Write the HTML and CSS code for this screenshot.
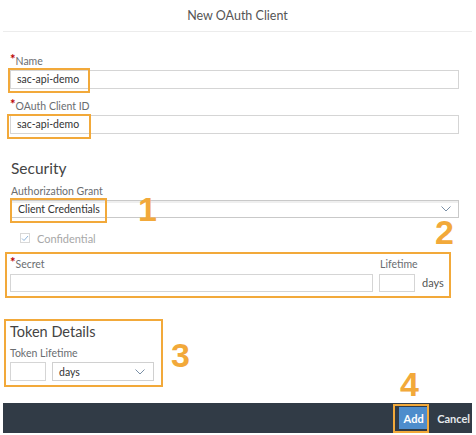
FILE: index.html
```html
<!DOCTYPE html>
<html>
<head>
<meta charset="utf-8">
<link rel="stylesheet" href="styles.css">
</head>
<body>
<div class="dialog">
  <header class="dlg-head">New OAuth Client</header>
  <main class="dlg-body">
    <div class="field">
      <div class="lbl"><span class="req">*</span>Name</div>
      <div class="input">sac-api-demo</div>
    </div>
    <div class="field">
      <div class="lbl"><span class="req">*</span>OAuth Client ID</div>
      <div class="input">sac-api-demo</div>
    </div>
    <h2 class="section-title">Security</h2>
    <div class="lbl lbl-grant">Authorization Grant</div>
    <div class="select">
      <span>Client Credentials</span>
      <svg class="chev" width="10" height="6" viewBox="0 0 10 6"><path d="M0.5 0.5 L5 5 L9.5 0.5" fill="none" stroke="#7a8fa6" stroke-width="1"/></svg>
    </div>
    <div class="check-row">
      <span class="checkbox"><svg width="8" height="7" viewBox="0 0 8 7"><path d="M1 3.5 L3 5.5 L7 1" fill="none" stroke="#8fb4d9" stroke-width="1"/></svg></span>
      <span class="check-text">Confidential</span>
    </div>
    <div class="secret-box">
      <div class="lbl"><span class="req">*</span>Secret</div>
      <div class="lbl">Lifetime</div>
      <div></div>
      <div class="input"></div>
      <div class="input"></div>
      <div class="unit">days</div>
    </div>
    <div class="token-box">
      <h3 class="token-title">Token Details</h3>
      <div class="lbl lbl-token">Token Lifetime</div>
      <div class="token-row">
        <div class="input small"></div>
        <div class="select token-select">
          <span>days</span>
          <svg class="chev" width="10" height="6" viewBox="0 0 10 6"><path d="M0.5 0.5 L5 5 L9.5 0.5" fill="none" stroke="#7a8fa6" stroke-width="1"/></svg>
        </div>
      </div>
    </div>
  </main>
  <footer class="dlg-foot">
    <button class="btn-add">Add</button>
    <button class="btn-cancel">Cancel</button>
  </footer>

  <span class="mark mark-name"></span>
  <span class="mark mark-id"></span>
  <span class="mark mark-cred"></span>
  <span class="mark mark-add"></span>
  <span class="num num-1">1</span>
  <span class="num num-2">2</span>
  <span class="num num-3">3</span>
  <span class="num num-4">4</span>
</div>
</body>
</html>
```

FILE: styles.css
```css
* { box-sizing: border-box; }
html, body { margin: 0; padding: 0; background: #fff; }
body { font-family: Lato, "Open Sans", sans-serif; color: #333; }

.dialog {
  position: relative;
  width: 476px;
  height: 435px;
  display: flex;
  flex-direction: column;
  background: #fff;
}

.dlg-head {
  height: 32px;
  margin: 0 4px 0 3px;
  border-bottom: 1px solid #ececec;
  display: flex;
  align-items: center;
  justify-content: center;
  font-size: 12.5px;
  color: #555;
  padding-bottom: 1px;
}

.dlg-body {
  flex: 1;
  padding: 22px 17px 0 10px;
}

.field { margin-bottom: 10px; }

.lbl {
  font-size: 10.5px;
  line-height: 14px;
  height: 14px;
  color: #6a6d70;
  white-space: nowrap;
}
.req {
  color: #bb0000;
  font-size: 13px;
  font-weight: bold;
  position: relative;
  top: -1px;
  line-height: 10px;
}

.input {
  margin-top: 2px;
  height: 19px;
  border: 1px solid #d5d5d5;
  background: #fff;
  font-size: 10.5px;
  line-height: 17px;
  padding-left: 6px;
  color: #333;
}

.section-title {
  margin: 25px 0 0 1px;
  font-size: 15.5px;
  line-height: 18px;
  font-weight: normal;
  color: #444;
}

.lbl-grant { margin-top: 7px; margin-left: 1px; }

.select {
  margin-top: 2px;
  margin-left: 1px;
  height: 18px;
  border: 1px solid #c9c9c9;
  box-shadow: inset 0 2px 0 #efefef;
  display: flex;
  align-items: center;
  justify-content: space-between;
  padding: 0 7px 0 6px;
  font-size: 10.5px;
  color: #333;
}
.chev { display: block; }

.check-row {
  margin-top: 13px;
  height: 14px;
  display: flex;
  align-items: center;
  padding-left: 10px;
}
.checkbox {
  width: 10px;
  height: 10px;
  border: 1px solid #d8d8d8;
  display: flex;
  align-items: center;
  justify-content: center;
}
.check-text {
  margin-left: 7px;
  font-size: 11px;
  color: #a8a8a8;
}

.secret-box {
  margin: 7px 0 0 -5px;
  width: 446px;
  height: 46px;
  border: 2px solid #f2a93a;
  padding: 3px 0 0 3px;
  display: grid;
  grid-template-columns: 363px 36px 1fr;
  grid-template-rows: 14px 18px;
  column-gap: 6px;
  row-gap: 3px;
}
.secret-box .input { margin-top: 0; height: 18px; }
.secret-box .lbl:nth-child(2) { padding-left: 1px; }
.unit {
  font-size: 11px;
  color: #555;
  line-height: 18px;
  padding-left: 1px;
}

.token-box {
  margin: 21px 0 0 -6px;
  width: 159px;
  height: 68px;
  border: 2px solid #f2a93a;
  padding: 2px 0 0 4px;
}
.token-title {
  margin: 0;
  font-size: 14.5px;
  line-height: 17px;
  font-weight: normal;
  color: #444;
}
.lbl-token { margin-top: 6px; }
.token-row {
  margin-top: 2px;
  display: flex;
  gap: 6px;
}
.token-row .input { margin-top: 0; }
.small { width: 36px; }
.token-select {
  margin: 0;
  width: 102px;
  height: 19px;
  border: 1px solid #d0d0d0;
  box-shadow: none;
  padding: 0 8px 0 6px;
}

.dlg-foot {
  height: 30px;
  margin: 0 4px 2px 3px;
  background: #313b46;
  display: flex;
  align-items: center;
  justify-content: flex-end;
  padding-right: 2px;
}
.btn-add {
  width: 29px;
  height: 22px;
  border: none;
  background: #4e8dcc;
  color: #fff;
  font-family: Lato, "Open Sans", sans-serif;
  font-size: 11px;
  font-weight: bold;
  padding: 0;
  margin-right: 9px;
}
.btn-cancel {
  border: none;
  background: transparent;
  color: #e6e9ec;
  font-family: Lato, "Open Sans", sans-serif;
  font-size: 11px;
  font-weight: bold;
  padding: 0;
}

.mark {
  position: absolute;
  border: 2px solid #f2a93a;
}
.mark-name { left: 8px; top: 68px; width: 82px; height: 25px; }
.mark-id { left: 7px; top: 114px; width: 84px; height: 25px; }
.mark-cred { left: 10px; top: 198px; width: 97px; height: 25px; }
.mark-add { left: 393px; top: 404px; width: 36px; height: 29px; }

.num {
  position: absolute;
  font-family: "Liberation Sans", Arial, sans-serif;
  font-weight: bold;
  font-size: 34px;
  line-height: 34px;
  color: #f2a93a;
}
.num-1 { left: 138px; top: 192px; }
.num-2 { left: 435px; top: 215px; }
.num-3 { left: 171px; top: 338px; }
.num-4 { left: 400px; top: 367px; }
```
